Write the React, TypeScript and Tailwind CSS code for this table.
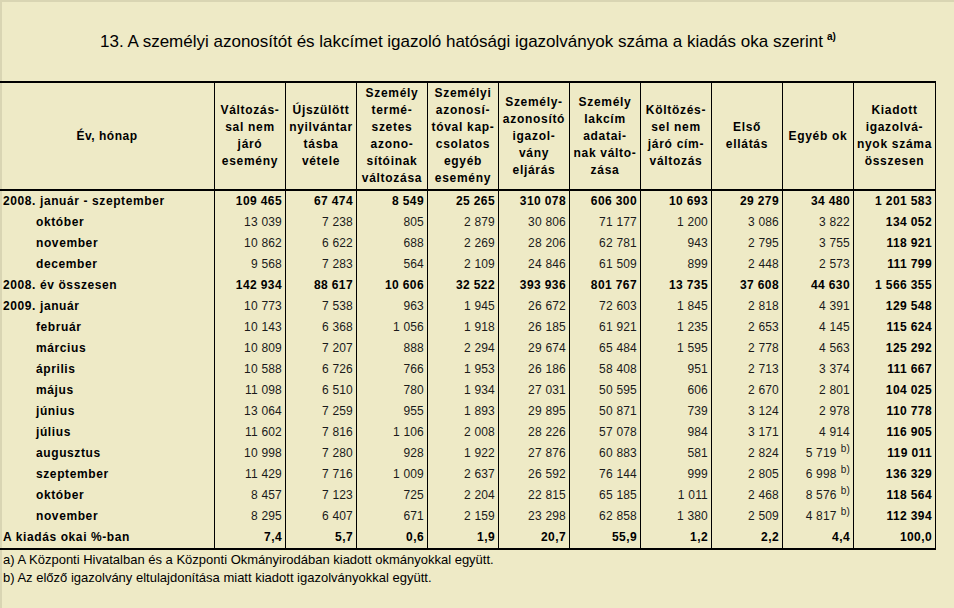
import React from 'react';

type Row = {
  label: string;
  indent?: boolean;
  bold?: boolean;
  values: (string | number)[];
  noteCol?: boolean;
};

const fmt = (v: string | number) =>
  typeof v === 'number' ? v.toString().replace(/\B(?=(\d{3})+(?!\d))/g, ' ') : v;

const headers: string[][] = [
  ['Változás-', 'sal nem', 'járó', 'esemény'],
  ['Újszülött', 'nyilvántar', 'tásba', 'vétele'],
  ['Személy', 'termé-', 'szetes', 'azono-', 'sítóinak', 'változása'],
  ['Személyi', 'azonosí-', 'tóval kap-', 'csolatos', 'egyéb', 'esemény'],
  ['Személy-', 'azonosító', 'igazol-', 'vány', 'eljárás'],
  ['Személy', 'lakcím', 'adatai-', 'nak válto-', 'zása'],
  ['Költözés-', 'sel nem', 'járó cím-', 'változás'],
  ['Első', 'ellátás'],
  ['Egyéb ok'],
  ['Kiadott', 'igazolvá-', 'nyok száma', 'összesen'],
];

const rows: Row[] = [
  { label: '2008. január - szeptember', bold: true, values: [109465, 67474, 8549, 25265, 310078, 606300, 10693, 29279, 34480, 1201583] },
  { label: 'október', indent: true, values: [13039, 7238, 805, 2879, 30806, 71177, 1200, 3086, 3822, 134052] },
  { label: 'november', indent: true, values: [10862, 6622, 688, 2269, 28206, 62781, 943, 2795, 3755, 118921] },
  { label: 'december', indent: true, values: [9568, 7283, 564, 2109, 24846, 61509, 899, 2448, 2573, 111799] },
  { label: '2008. év összesen', bold: true, values: [142934, 88617, 10606, 32522, 393936, 801767, 13735, 37608, 44630, 1566355] },
  { label: '2009. január', values: [10773, 7538, 963, 1945, 26672, 72603, 1845, 2818, 4391, 129548] },
  { label: 'február', indent: true, values: [10143, 6368, 1056, 1918, 26185, 61921, 1235, 2653, 4145, 115624] },
  { label: 'március', indent: true, values: [10809, 7207, 888, 2294, 29674, 65484, 1595, 2778, 4563, 125292] },
  { label: 'április', indent: true, values: [10588, 6726, 766, 1953, 26186, 58408, 951, 2713, 3374, 111667] },
  { label: 'május', indent: true, values: [11098, 6510, 780, 1934, 27031, 50595, 606, 2670, 2801, 104025] },
  { label: 'június', indent: true, values: [13064, 7259, 955, 1893, 29895, 50871, 739, 3124, 2978, 110778] },
  { label: 'július', indent: true, values: [11602, 7816, 1106, 2008, 28226, 57078, 984, 3171, 4914, 116905] },
  { label: 'augusztus', indent: true, noteCol: true, values: [10998, 7280, 928, 1922, 27876, 60883, 581, 2824, 5719, 119011] },
  { label: 'szeptember', indent: true, noteCol: true, values: [11429, 7716, 1009, 2637, 26592, 76144, 999, 2805, 6998, 136329] },
  { label: 'október', indent: true, noteCol: true, values: [8457, 7123, 725, 2204, 22815, 65185, 1011, 2468, 8576, 118564] },
  { label: 'november', indent: true, noteCol: true, values: [8295, 6407, 671, 2159, 23298, 62858, 1380, 2509, 4817, 112394] },
  { label: 'A kiadás okai %-ban', bold: true, values: ['7,4', '5,7', '0,6', '1,9', '20,7', '55,9', '1,2', '2,2', '4,4', '100,0'] },
];

const grid = 'grid grid-cols-[215px_repeat(9,71px)_82px]';

export default function App() {
  return (
    <div className="w-[954px] h-[608px] bg-[#eeeac6] text-black font-['Liberation_Sans',Arial,sans-serif] shadow-[inset_2px_2px_0_#d9d5b3] overflow-hidden">
      {/* Cím */}
      <div className="h-[81px] w-[936px] flex items-center justify-center pt-[2px]">
        <h1 className="text-[17px] font-normal whitespace-nowrap">
          13. A személyi azonosítót és lakcímet igazoló hatósági igazolványok száma a kiadás oka szerint
          <sup className="text-[10px] font-bold ml-[4px] relative -top-[7px]">a)</sup>
        </h1>
      </div>

      {/* Táblázat */}
      <div className="w-[936px] border-y-2 border-black">
        <div className={`${grid} h-[108px] border-b-2 border-black`}>
          <div className="border-r border-black flex items-center justify-center text-[12px] font-bold tracking-[0.5px]">
            Év, hónap
          </div>
          {headers.map((lines, i) => (
            <div key={i} className="border-r border-black flex flex-col items-center justify-center text-[12px] leading-[17px] font-bold tracking-[0.7px] whitespace-nowrap">
              {lines.map((l, j) => (
                <span key={j}>{l}</span>
              ))}
            </div>
          ))}
        </div>

        {rows.map((r, i) => (
          <div key={i} className={`${grid} h-[21px] text-[12px] leading-[21px]`}>
            <div className={`border-r border-black font-bold tracking-[0.6px] whitespace-nowrap ${r.indent ? 'pl-[36px]' : 'pl-[3px]'}`}>
              {r.label}
            </div>
            {r.values.map((v, j) => {
              const isTotal = j === r.values.length - 1;
              const bold = r.bold || isTotal;
              const note = r.noteCol && j === 8;
              return (
                <div
                  key={j}
                  className={`border-r border-black text-right pr-[3px] whitespace-nowrap ${bold ? 'font-bold tracking-[0.4px]' : 'text-[#1a1a1a] tracking-[0.2px]'}`}
                >
                  {fmt(v)}
                  {note && <sup className="text-[10px] ml-[4px] relative -top-[5px]">b)</sup>}
                </div>
              );
            })}
          </div>
        ))}
      </div>

      {/* Lábjegyzetek */}
      <div className="pl-[3px] pt-[1px] text-[13px] leading-[18px]">
        <p>a) A Központi Hivatalban és a Központi Okmányirodában kiadott okmányokkal együtt.</p>
        <p>b) Az előző igazolvány eltulajdonítása miatt kiadott igazolványokkal együtt.</p>
      </div>
    </div>
  );
}
